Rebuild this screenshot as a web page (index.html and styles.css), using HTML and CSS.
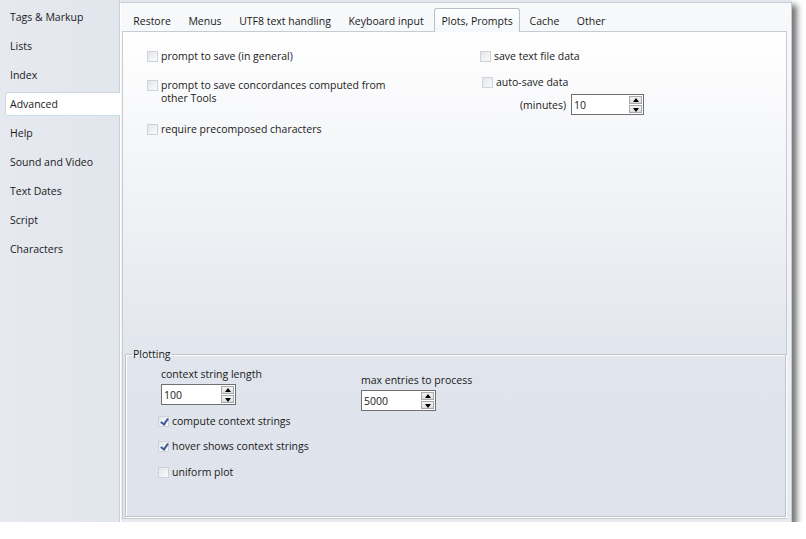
FILE: index.html
```html
<!DOCTYPE html>
<html>
<head>
<meta charset="utf-8">
<link rel="stylesheet" href="styles.css">
</head>
<body>
<div class="window">
  <div class="sidebar">
    <div class="nav">Tags &amp; Markup</div>
    <div class="nav">Lists</div>
    <div class="nav">Index</div>
    <div class="nav active">Advanced</div>
    <div class="nav">Help</div>
    <div class="nav">Sound and Video</div>
    <div class="nav">Text Dates</div>
    <div class="nav">Script</div>
    <div class="nav">Characters</div>
  </div>
  <div class="main">
    <div class="tabs">
      <div class="tab">Restore</div>
      <div class="tab">Menus</div>
      <div class="tab">UTF8 text handling</div>
      <div class="tab">Keyboard input</div>
      <div class="tab selected">Plots, Prompts</div>
      <div class="tab">Cache</div>
      <div class="tab">Other</div>
    </div>
    <div class="panel">
      <div class="prompts">
        <div class="col-left">
          <div class="opt o1"><span class="cb"></span><span class="lbl">prompt to save (in general)</span></div>
          <div class="opt o2"><span class="cb"></span><span class="lbl">prompt to save concordances computed from<br>other Tools</span></div>
          <div class="opt o3"><span class="cb"></span><span class="lbl">require precomposed characters</span></div>
        </div>
        <div class="col-right">
          <div class="opt r1"><span class="cb"></span><span class="lbl">save text file data</span></div>
          <div class="opt r2"><span class="cb"></span><span class="lbl">auto-save data</span></div>
          <div class="minutes"><span class="lbl">(minutes)</span>
            <div class="spin"><span class="val">10</span><span class="btns"><span class="up"></span><span class="dn"></span></span></div>
          </div>
        </div>
      </div>
      <fieldset class="group">
        <legend>Plotting</legend>
        <div class="gcols">
          <div class="gleft">
            <div class="flabel">context string length</div>
            <div class="spin s2"><span class="val">100</span><span class="btns"><span class="up"></span><span class="dn"></span></span></div>
            <div class="opt g1"><span class="cb checked"></span><span class="lbl">compute context strings</span></div>
            <div class="opt g2"><span class="cb checked"></span><span class="lbl">hover shows context strings</span></div>
            <div class="opt g3"><span class="cb"></span><span class="lbl">uniform plot</span></div>
          </div>
          <div class="gright">
            <div class="flabel">max entries to process</div>
            <div class="spin s2"><span class="val">5000</span><span class="btns"><span class="up"></span><span class="dn"></span></span></div>
          </div>
        </div>
      </fieldset>
    </div>
  </div>
</div>
</body>
</html>
```

FILE: styles.css
```css
* { box-sizing: border-box; }
html, body { margin: 0; padding: 0; background: #ffffff; }
body {
  font-family: "Open Sans", "Noto Sans", "DejaVu Sans", sans-serif;
  font-size: 10.5px;
  color: #1a1a1a;
}
.window {
  display: flex;
  width: 792px;
  height: 522px;
  box-shadow: 5px 5px 6px rgba(0, 0, 0, 0.55);
  background: #e3e7ee;
}
.sidebar {
  width: 120px;
  padding-top: 3px;
  background: linear-gradient(90deg, #e6e9ef 0%, #e2e6ed 100%);
  border-right: 1px solid #cdd0d5;
}
.nav {
  height: 29px;
  line-height: 29px;
  padding-left: 10px;
  white-space: nowrap;
}
.nav.active {
  margin: 2px -1px 3px 5px;
  height: 24px;
  line-height: 22px;
  padding-left: 4px;
  background: #ffffff;
  border: 1px solid #d2d8e0;
  border-right: none;
  border-bottom-color: #c7e4ee;
  border-radius: 3px 0 0 3px;
}
.main {
  flex: 1;
  display: flex;
  flex-direction: column;
  margin-top: 2px;
  border-top: 1px solid #c8ccd2;
  border-right: 1px solid #c8ccd2;
  border-left: 1px solid #ffffff;
  padding: 0 4px 3px 1px;
  background: linear-gradient(#f8f9fb, #e8ebf0);
}
.tabs {
  height: 28px;
  display: flex;
  align-items: flex-end;
  padding-left: 2.5px;
}
.tab {
  height: 22px;
  padding: 2px 8.75px 0 8.75px;
  line-height: 20px;
  white-space: nowrap;
}
.tab.selected {
  margin: 0 1px -1px 2px;
  height: 24px;
  line-height: 21px;
  padding: 2px 6px 0 6px;
  background: linear-gradient(#ffffff, #f4f7fb);
  border: 1px solid #b9bfc8;
  border-bottom: none;
  border-radius: 3px 3px 0 0;
  position: relative;
  z-index: 1;
}
.panel {
  flex: 1;
  display: flex;
  flex-direction: column;
  border: 1px solid #c6cad1;
  background: linear-gradient(#ffffff 0%, #eef0f4 40%, #e0e4ec 70%, #dfe3eb 100%);
  padding: 0 0 1px 1px;
}
.prompts {
  display: flex;
  padding-top: 18px;
}
.col-left {
  width: 356px;
  padding-left: 23px;
}
.col-right { flex: 1; }
.opt {
  display: flex;
  align-items: flex-start;
  line-height: 13px;
}
.cb {
  flex: none;
  width: 11px;
  height: 11px;
  margin: 1px 3px 0 0;
  border: 1px solid #cfd2d7;
  background: linear-gradient(135deg, #e4e6ea, #f9fafb);
  position: relative;
}
.cb.checked::after {
  content: "";
  position: absolute;
  left: 3px;
  top: 0px;
  width: 3px;
  height: 6px;
  border-right: 2px solid #3f5a9a;
  border-bottom: 2px solid #3f5a9a;
  transform: rotate(35deg);
}
.o1 { margin-top: 0; }
.o2 { margin-top: 16px; }
.o3 { margin-top: 18px; }
.r1 { margin-top: 0; }
.r2 { margin-top: 13px; padding-left: 2px; }
.minutes {
  display: flex;
  align-items: center;
  margin-top: 5px;
  margin-left: 40px;
  gap: 5px;
}
.spin {
  width: 73px;
  height: 21px;
  border: 1px solid #6f6f6f;
  background: #ffffff;
  display: flex;
  align-items: center;
  padding-left: 2px;
  position: relative;
}
.val { flex: 1; }
.btns {
  display: flex;
  flex-direction: column;
  gap: 1px;
  margin-right: 1px;
}
.btns span {
  width: 13px;
  height: 8px;
  border: 1px solid #a5a9ae;
  background: linear-gradient(#f5f5f5, #dcdcdc);
  position: relative;
}
.btns .up::after, .btns .dn::after {
  content: "";
  position: absolute;
  left: 3px;
  width: 0;
  height: 0;
  border-left: 3px solid transparent;
  border-right: 3px solid transparent;
}
.btns .up::after { top: 1px; border-bottom: 4px solid #000; }
.btns .dn::after { top: 2px; border-top: 4px solid #000; }
.group {
  margin: auto 0 0 1px;
  height: 169px;
  border: 1px solid #c0c4ca;
  box-shadow: inset 1px 1px 0 #ffffff, 1px 1px 0 #ffffff;
  padding: 0 0 0 35px;
  min-width: 0;
}
.group legend {
  padding: 0 1px;
  margin-left: -29px;
  line-height: 12px;
}
.gcols { display: flex; }
.gleft { width: 200px; }
.flabel { line-height: 14px; margin-top: 7px; }
.s2 { width: 75px; margin-top: 3px; }
.gleft .opt { margin-left: -3px; }
.g1 { margin-top: 10px; }
.g2 { margin-top: 12px; }
.g3 { margin-top: 13px; }
.gright .flabel { margin-top: 13px; }
```
